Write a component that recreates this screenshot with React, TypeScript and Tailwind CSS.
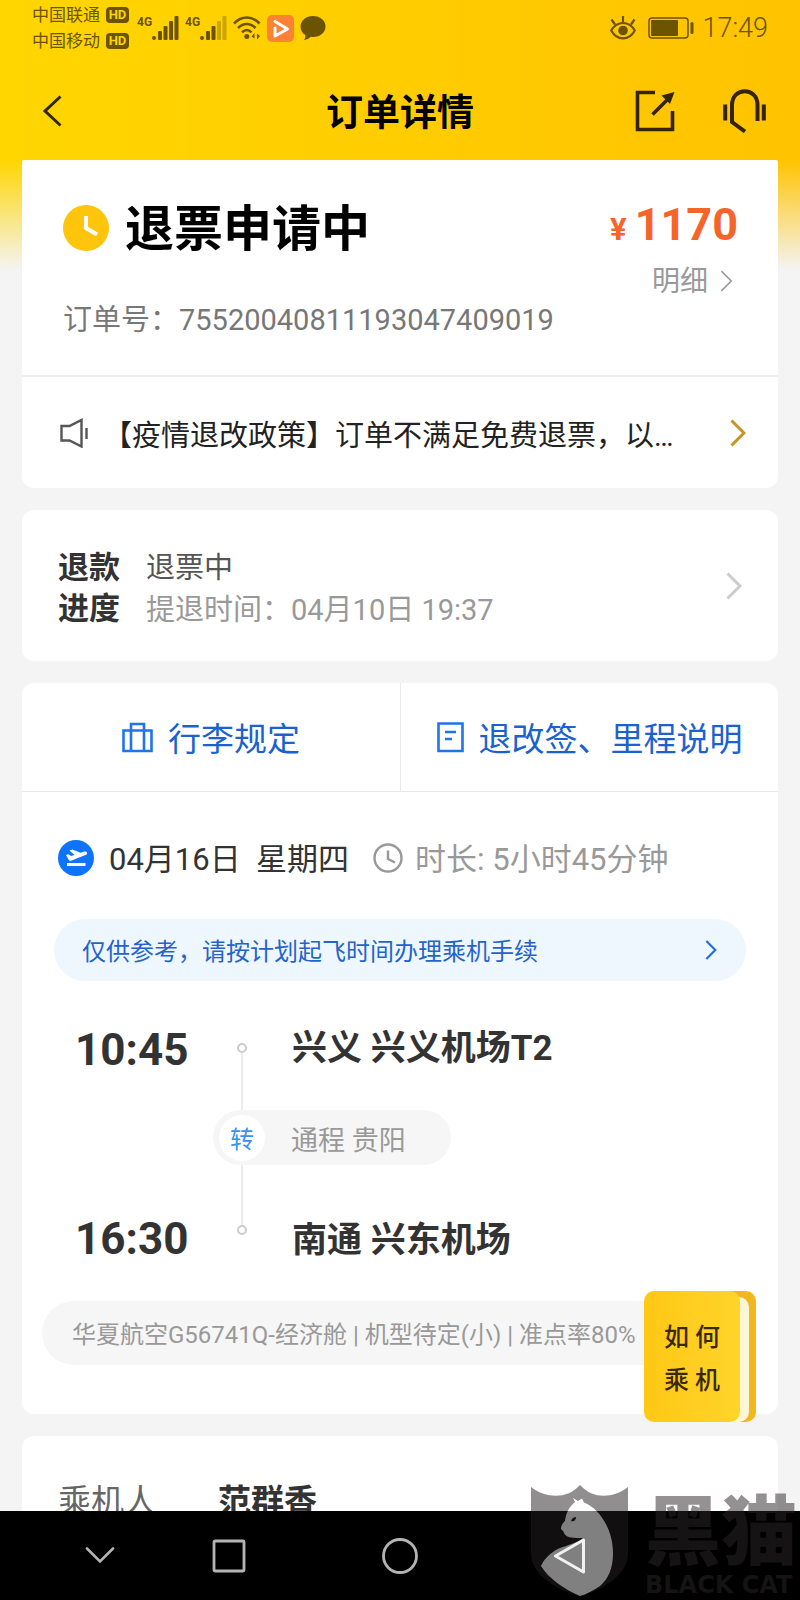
import type { ReactNode } from 'react';

const pedido = {
  estado: '退票申请中',
  precio: '1170',
  numero: '75520040811193047409019',
  aviso: '【疫情退改政策】订单不满足免费退票，以…',
  pasajero: '范群香',
};

interface ChevronProps {
  className: string;
  strokeWidth?: number;
}

function Chevron({ className, strokeWidth = 2 }: ChevronProps) {
  return (
    <svg viewBox="0 0 16 28" className={className} fill="none" stroke="currentColor" strokeWidth={strokeWidth}>
      <path d="M1.500 1.500 14 14 1.500 26.500" />
    </svg>
  );
}

function Signal({ weak = false }: { weak?: boolean }) {
  return (
    <div className="flex items-start">
      <span className="text-[12px] leading-[12px] font-bold">4G</span>
      <svg viewBox="0 0 27 25" className="h-[25px] w-[27px]" fill="currentColor">
        <rect x="0" y="20" width="4" height="4" rx="2" />
        <rect x="6" y="15" width="4" height="9" rx="1" />
        <rect x="11.500" y="10" width="4" height="14" rx="1" />
        <rect x="17" y="5" width="4" height="19" rx="1" opacity={weak ? 0.35 : 1} />
        <rect x="22.500" y="0" width="4" height="24" rx="1" opacity={weak ? 0.35 : 1} />
      </svg>
    </div>
  );
}

function Carrier({ name }: { name: string }) {
  return (
    <div className="flex items-center gap-[6px]">
      <span className="text-[17px] leading-[26px]">{name}</span>
      <span className="h-4 w-[23px] rounded-[4px] bg-[#6b5300] text-center text-[13px] leading-4 font-bold text-[#ffd205]">HD</span>
    </div>
  );
}

function StatusBar() {
  return (
    <div className="flex h-14 items-center justify-between pr-8 pl-8 text-[#6b5300]">
      <div className="flex items-center">
        <div className="flex flex-col">
          <Carrier name="中国联通" />
          <Carrier name="中国移动" />
        </div>
        <div className="flex items-center gap-[6px] pl-2">
          <Signal />
          <Signal weak />
          {/* Wifi */}
          <svg viewBox="0 0 28 24" className="h-6 w-7" fill="none" stroke="currentColor" strokeWidth="2.600">
            <path d="M1 7.500C8.500-.5 19-.5 26.500 7.500" />
            <path d="M5 12c5.300-5.400 12.300-5.400 17.500 0" />
            <path d="M9 16.300c3.200-3 6.500-3 9.500 0" />
            <circle cx="13.800" cy="20.500" r="2.500" fill="currentColor" stroke="none" />
            <path d="M21.500 17v5.500l-3-2zM24 23.500V17.500l3 2.500z" fill="currentColor" stroke="none" />
          </svg>
          <svg viewBox="0 0 27 27" className="h-[27px] w-[27px]">
            <rect width="27" height="27" rx="5" fill="#fb8233" />
            <path d="M8 6.500 20.500 14 8 21V13" fill="none" stroke="#fff" strokeWidth="3" strokeLinejoin="round" strokeLinecap="round" />
          </svg>
          <svg viewBox="0 0 26 24" className="h-6 w-[26px]" fill="currentColor">
            <path d="M13 0c7 0 12.500 4.500 12.500 10.500S20 21 13 21c-1 0-1.600 0-2.500-.2C9 22.500 7 23.700 4 24c1.300-1.700 1.600-3 1.300-5C2.300 17.200.5 14 .5 10.500.5 4.500 6 0 13 0z" />
          </svg>
        </div>
      </div>
      <div className="flex items-center gap-2">
        <div className="flex items-center gap-3">
          {/* Modo protección de ojos */}
          <svg viewBox="0 0 26 24" className="h-6 w-[26px]" fill="none" stroke="currentColor" strokeWidth="2.200">
            <path d="M1.200 14.500C7 4.500 19 4.500 24.800 14.500 19 25 7 25 1.200 14.500z" />
            <circle cx="13" cy="14.500" r="4.800" fill="currentColor" stroke="none" />
            <path d="M13 0v6M1.500 3.500 5 8.500M24.500 3.500 21 8.500" />
          </svg>
          <svg viewBox="0 0 46 22" className="h-[22px] w-[46px]" fill="none" stroke="currentColor">
            <rect x="1" y="1" width="39" height="20" rx="3" strokeWidth="1.500" />
            <rect x="3" y="3" width="27" height="16" rx="1" fill="currentColor" stroke="none" />
            <rect x="42.500" y="5" width="3" height="12" rx="1.500" fill="currentColor" stroke="none" />
          </svg>
        </div>
        <span className="text-[27px] leading-[32px] font-light">17:49</span>
      </div>
    </div>
  );
}

function TitleBar() {
  return (
    <div className="grid h-[104px] grid-cols-[1fr_auto_1fr] items-center px-[34px] pt-[6px] text-[#33240a]">
      <button aria-label="返回" className="w-8 pl-2">
        <svg viewBox="0 0 20 32" className="h-8 w-5" fill="none" stroke="currentColor" strokeWidth="3">
          <path d="M18.500 1.500 3 16l15.500 14.500" />
        </svg>
      </button>
      <h1 className="pt-[6px] text-[37px] leading-[50px] font-bold text-black">订单详情</h1>
      <div className="flex items-center justify-end gap-12">
        <button aria-label="分享">
          <svg viewBox="0 0 40 42" className="h-[42px] w-10" fill="none" stroke="currentColor" strokeWidth="3.600">
            <path d="M20 2.500H2.500v37h35V21" />
            <path d="M17.500 24.500 33 9" />
            <path d="M26.500 5.500 39.500 2 35 14z" fill="currentColor" stroke="none" />
          </svg>
        </button>
        <button aria-label="客服">
          <svg viewBox="0 0 43 44" className="h-11 w-[43px]" fill="none" stroke="currentColor" strokeWidth="4">
            <path d="M2.200 15.500v16M40.800 15.500v16" />
            <path d="M34.500 32V16C34.500-2.500 9-2.500 9 16v17l13 9.500" />
          </svg>
        </button>
      </div>
    </div>
  );
}

function Card({ children, className = 'rounded-xl' }: { children: ReactNode; className?: string }) {
  return <section className={`bg-white ${className}`}>{children}</section>;
}

function OrderCard() {
  return (
    <Card className="rounded-t-[2px] rounded-b-xl">
      <div className="flex justify-between border-b-2 border-[#eeeeee] pt-9 pr-10 pb-[35px] pl-[41px]">
        <div>
          <div className="flex h-16 items-center gap-4">
            <svg viewBox="0 0 46 46" className="h-[46px] w-[46px]" fill="none">
              <circle cx="23" cy="23" r="23" fill="#ffc40c" />
              <path d="M23 11v12l11 6.500" stroke="#fff" strokeWidth="4" />
            </svg>
            <h2 className="pt-1 text-[49px] leading-[64px] font-bold text-black">{pedido.estado}</h2>
          </div>
          <p className="mt-10 text-[29px] leading-[40px] text-[#777777]">订单号：{pedido.numero}</p>
        </div>
        <div className="flex flex-col items-end">
          <p className="flex items-baseline gap-2 leading-[58px] font-bold text-[#f5652a]">
            <span className="text-[31px]">¥</span>
            <span className="text-[45px]">{pedido.precio}</span>
          </p>
          <button className="flex h-11 items-center gap-3 pr-[5px] text-[28px] text-[#999999]">
            <span className="pt-[2px]">明细</span>
            <Chevron className="h-[22px] w-[13px]" />
          </button>
        </div>
      </div>
      <button className="flex h-[111px] w-full items-center pr-8 pl-[38px] text-left">
        <svg viewBox="0 0 28 30" className="h-[30px] w-7 text-[#555555]" fill="none" stroke="currentColor" strokeWidth="2.400">
          <path d="M1.500 8h8L21.500 2v26.500l-12-6h-8z" />
          <path d="M26.500 10v11" />
        </svg>
        <span className="ml-[15px] flex-1 truncate pt-[6px] text-[29px] leading-[44px] text-[#222222]">{pedido.aviso}</span>
        <Chevron className="h-7 w-4 text-[#c8931e]" strokeWidth={3} />
      </button>
    </Card>
  );
}

function RefundCard() {
  return (
    <Card>
      <button className="flex h-[151px] w-full items-center pr-9 pl-9 text-left">
        <span className="w-[62px] pt-[5px] text-[31px] leading-[41px] font-bold text-[#333333]">退款进度</span>
        <span className="ml-[26px] flex flex-1 flex-col pt-[7px] text-[29px] leading-[42px]">
          <span className="text-[#555555]">退票中</span>
          <span className="text-[#999999]">提退时间：04月10日 19:37</span>
        </span>
        <Chevron className="h-7 w-4 text-[#cccccc]" strokeWidth={3} />
      </button>
    </Card>
  );
}

function Node() {
  return <span className="h-[10px] w-[10px] rounded-full border-2 border-[#cccccc]" />;
}

function Timeline() {
  return (
    <div className="mt-[37px] flex flex-col pl-[53px] text-[#333333]">
      <div className="flex h-[92px]">
        <span className="w-[138px] pt-[2px] text-[44px] leading-[60px] font-bold">10:45</span>
        <div className="flex w-[58px] flex-col items-center pt-[25px]">
          <Node />
          <span className="w-[2px] flex-1 bg-[#ebebeb]" />
        </div>
        <span className="pt-[2px] pl-[21px] text-[35px] leading-[58px] font-bold">兴义 兴义机场T2</span>
      </div>
      <div className="ml-[138px] flex h-[55px] items-center self-start rounded-full bg-[#f6f6f6] pr-[45px] pl-[6px]">
        <span className="h-[46px] w-[46px] rounded-full bg-white pt-[2px] text-center text-[24px] leading-[46px] text-[#3a91ee]">转</span>
        <span className="pt-[6px] pl-[26px] text-[27px] leading-[40px] text-[#999999]">通程 贵阳</span>
      </div>
      <div className="flex h-[103px]">
        <span className="w-[138px] pt-[44px] text-[44px] leading-[60px] font-bold">16:30</span>
        <div className="flex w-[58px] flex-col items-center">
          <span className="h-[60px] w-[2px] bg-[#ebebeb]" />
          <Node />
        </div>
        <span className="pt-[46px] pl-[21px] text-[35px] leading-[60px] font-bold">南通 兴东机场</span>
      </div>
    </div>
  );
}

function FlightCard() {
  return (
    <Card>
      {/* Enlaces de normas */}
      <div className="grid h-[109px] grid-cols-2 border-b border-[#e8e8e8] text-[33px] text-[#1a62d0]">
        <button className="flex items-center justify-center gap-[15px]">
          <svg viewBox="0 0 31 31" className="h-[31px] w-[31px] text-[#1f74ee]" fill="none" stroke="currentColor" strokeWidth="2.600">
            <path d="M1.500 8.500h28v20.500h-28z" />
            <path d="M9 29V2h13v27" />
          </svg>
          <span className="pt-[5px]">行李规定</span>
        </button>
        <button className="flex items-center justify-center gap-[15px] border-l border-[#e8e8e8]">
          <svg viewBox="0 0 27 31" className="h-[31px] w-[27px] text-[#1f74ee]" fill="none" stroke="currentColor" strokeWidth="2.600">
            <path d="M1.500 1.500h24v27.500h-24z" />
            <path d="M8 10h11M8 17h7" />
          </svg>
          <span className="pt-[5px]">退改签、里程说明</span>
        </button>
      </div>

      {/* Fecha y duración */}
      <div className="mt-[45px] flex h-[42px] items-center pl-9 text-[31px] leading-[42px]">
        <svg viewBox="0 0 36 36" className="h-9 w-9">
          <circle cx="18" cy="18" r="18" fill="#0d74fb" />
          <path d="M9 24.500h18.500" stroke="#fff" strokeWidth="3" />
          <path d="M8 15l2.500-.8 2.500 1.800 3.500-1-5-4.500 3-1 8 3.200 4-1.200c2.800-.6 3.600 2.400 1 3.600L13 20.800c-1 .3-1.600 0-2.200-.9z" fill="#fff" />
        </svg>
        <span className="pt-1 pl-[15px] whitespace-pre text-[#333333]">04月16日  星期四</span>
        <svg viewBox="0 0 30 30" className="ml-6 h-[30px] w-[30px] text-[#999999]" fill="none" stroke="currentColor" strokeWidth="2.400">
          <circle cx="15" cy="15" r="13.500" />
          <path d="M15 7.500V16l7 3.500" />
        </svg>
        <span className="pt-1 pl-3 text-[#999999]">时长: 5小时45分钟</span>
      </div>

      <button className="mx-8 mt-10 flex h-[62px] w-[calc(100%-64px)] items-center justify-between rounded-full bg-[#eff7fe] pr-[29px] pl-7 text-[24px] text-[#2463cc]">
        <span className="pt-1">仅供参考，请按计划起飞时间办理乘机手续</span>
        <Chevron className="h-5 w-3 text-[#1f6fe0]" strokeWidth={3} />
      </button>

      <Timeline />

      <div className="pt-[33px] pr-[38px] pb-[49px] pl-5">
        <p className="h-16 truncate rounded-full bg-[#f6f6f6] pl-[30px] text-[24px] leading-[68px] text-[#999999]">
          华夏航空G56741Q-经济舱 | 机型待定(小) | 准点率80%
        </p>
      </div>
    </Card>
  );
}

function PassengerCard() {
  return (
    <Card>
      <dl className="flex px-9 pt-[42px] pb-10 text-[33px] leading-[48px]">
        <dt className="w-[160px] text-[#666666]">乘机人</dt>
        <dd className="font-bold text-[#333333]">{pedido.pasajero}</dd>
      </dl>
    </Card>
  );
}

/* Botón flotante con forma de libro */
function GuideButton() {
  return (
    <button className="absolute right-11 bottom-[89px] h-[131px] w-28">
      <span className="absolute inset-y-0 right-0 w-10 rounded-[10px] bg-[#efb81f]" />
      <span className="absolute top-[6px] right-[7px] bottom-0 w-10 rounded-[10px] bg-[#fff6d8]" />
      <span className="absolute inset-y-0 left-0 flex w-24 flex-col items-center justify-center rounded-[10px] bg-linear-to-r from-[#ffc814] to-[#ffd42a] pt-1 text-[25px] leading-[43px] font-medium text-[#3a2800]">
        <span>如 何</span>
        <span>乘 机</span>
      </span>
    </button>
  );
}

function NavBar() {
  return (
    <nav className="flex h-[89px] shrink-0 items-center justify-center gap-[135px] bg-black text-[#b4b4b4]">
      <div className="flex gap-[93px]">
        <button aria-label="收起">
          <svg viewBox="0 0 36 36" className="h-9 w-9" fill="none" stroke="currentColor" strokeWidth="2.600" strokeLinecap="round">
            <path d="M5 10.500 18 23.500 31 10.500" />
          </svg>
        </button>
        <button aria-label="最近任务">
          <svg viewBox="0 0 36 36" className="h-9 w-9" fill="none" stroke="currentColor" strokeWidth="2.800">
            <rect x="3" y="3" width="30" height="30" rx="1" />
          </svg>
        </button>
      </div>
      <button aria-label="主页">
        <svg viewBox="0 0 36 36" className="h-9 w-9" fill="none" stroke="currentColor" strokeWidth="2.800">
          <circle cx="18" cy="18" r="16.500" />
        </svg>
      </button>
      <div className="flex w-[165px]">
        <button aria-label="后退">
          <svg viewBox="0 0 36 36" className="h-9 w-9" fill="none" stroke="#e4e4e4" strokeWidth="3" strokeLinejoin="round">
            <path d="M30.500 2v32L2.500 18z" />
          </svg>
        </button>
      </div>
    </nav>
  );
}

/* Sello superpuesto */
function Watermark() {
  return (
    <div className="pointer-events-none absolute right-0 bottom-0 flex items-end gap-4 opacity-50">
      <svg viewBox="0 0 98 113" className="mb-[2px] h-[113px] w-[98px]">
        <path d="M0 2c14 11 36 13 49-2 13 15 34 13 48 2v66c0 20-20 34-48 44C20 102 0 88 0 68z" fill="#231f20" />
        <path d="M42 13l5 3 4-2.500 2 4C68 23 82 44 82 68c0 16-5 26-13 33-6 4-13 8-20 10-16-7-31-17-39-30 4-9 12-15 19-18 8-3 17-5 23-10-5 0-8 0-12-.5-4-.5-7-3-7.500-6l-2.500-2.500c0-4 2-6 4-8 1-8 4-14 10-19z" fill="#fff" />
        <path d="M40 36c1-3 3-4 5-4 0 3-2 5-5 4z" fill="#231f20" />
      </svg>
      <div className="mb-[3px] w-[155px] text-[#2a2627]">
        <p className="text-[76px] leading-[72px] font-black">黑猫</p>
        <p className="mt-1 font-['DejaVu_Sans'] text-[24px] leading-[24px] font-bold whitespace-nowrap">BLACK CAT</p>
      </div>
    </div>
  );
}

export default function App() {
  return (
    <div className="relative flex h-screen flex-col overflow-hidden bg-[#f4f4f4] font-[Roboto,'Noto_Sans_CJK_SC',sans-serif]">
      <div className="flex-1 overflow-hidden bg-[linear-gradient(to_bottom,transparent_160px,#f4f4f4_270px),linear-gradient(to_right,#ffd600,#ffc300)]">
        <header>
          <StatusBar />
          <TitleBar />
        </header>
        <main className="flex flex-col gap-[22px] px-[22px]">
          <OrderCard />
          <RefundCard />
          <FlightCard />
          <PassengerCard />
        </main>
      </div>
      <div className="relative">
        <GuideButton />
      </div>
      <NavBar />
      <Watermark />
    </div>
  );
}
